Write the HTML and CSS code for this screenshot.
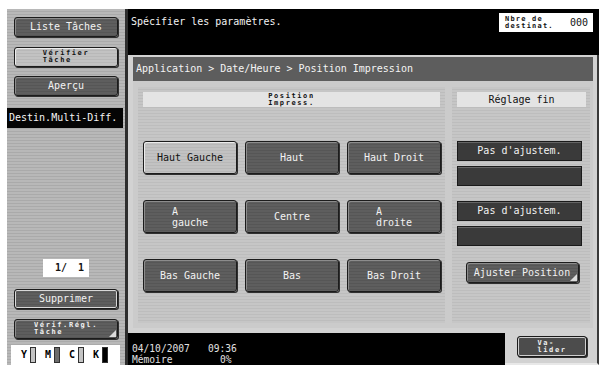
FILE: index.html
```html
<!DOCTYPE html>
<html lang="fr">
<head>
<meta charset="utf-8">
<title>Position Impression</title>
<link rel="stylesheet" href="styles.css">
</head>
<body>
<div class="screen">
  <aside class="side">
    <div class="btn side-btn first">Liste Tâches</div>
    <div class="btn side-btn light tiny-btn"><span class="tiny">Vérifier<br>Tâche</span></div>
    <div class="btn side-btn">Aperçu</div>
    <div class="destin">Destin.Multi-Diff.</div>
    <div class="spacer"></div>
    <div class="counter"><span>1/</span><span>1</span></div>
    <div class="btn side-btn framed">Supprimer</div>
    <div class="btn side-btn corner tiny-btn"><span class="tiny">Vérif.Régl.<br>Tâche</span></div>
    <div class="cmyk">
      <span class="ink">Y<i class="bar pale"></i></span>
      <span class="ink">M<i class="bar mid"></i></span>
      <span class="ink">C<i class="bar pale"></i></span>
      <span class="ink">K<i class="bar full"></i></span>
    </div>
  </aside>
  <div class="sep"></div>
  <main class="main">
    <header class="topbar">
      <div class="msg">Spécifier les paramètres.</div>
      <div class="dest-count"><span class="tiny dark">Nbre de<br>destinat.</span><span class="num">000</span></div>
    </header>
    <section class="frame">
      <div class="crumb">Application &gt; Date/Heure &gt; Position Impression</div>
      <div class="content">
        <div class="pos-panel">
          <div class="subhead"><span class="tiny dark">Position<br>Impress.</span></div>
          <div class="grid">
            <div class="btn pos light">Haut Gauche</div>
            <div class="btn pos">Haut</div>
            <div class="btn pos">Haut Droit</div>
            <div class="btn pos"><span class="lines">A<br>gauche</span></div>
            <div class="btn pos">Centre</div>
            <div class="btn pos"><span class="lines">A<br>droite</span></div>
            <div class="btn pos">Bas Gauche</div>
            <div class="btn pos">Bas</div>
            <div class="btn pos">Bas Droit</div>
          </div>
        </div>
        <div class="fine-panel">
          <div class="subhead fine-head">Réglage fin</div>
          <div class="adj first-adj">Pas d'ajustem.</div>
          <div class="adj empty"></div>
          <div class="adj second-adj">Pas d'ajustem.</div>
          <div class="adj empty"></div>
          <div class="btn adjust corner">Ajuster Position</div>
        </div>
      </div>
    </section>
    <footer class="bottom">
      <div class="status">
        <div class="row"><span class="c1">04/10/2007</span><span>09:36</span></div>
        <div class="row"><span class="c1">Mémoire</span><span class="pct">0%</span></div>
      </div>
      <div class="ok-cell">
        <div class="btn ok"><span class="tiny">Va-<br>lider</span></div>
      </div>
    </footer>
  </main>
</div>
</body>
</html>
```

FILE: styles.css
```css
html, body {
  margin: 0;
  padding: 0;
  background: #ffffff;
  overflow: hidden;
}

body {
  font-family: "DejaVu Sans Mono", "Liberation Mono", monospace;
  font-size: 10px;
  line-height: 12px;
}

.screen {
  display: flex;
  margin: 9px 0 0 7px;
  width: 592px;
  height: 356px;
}

/* ---------- left column ---------- */
.side {
  width: 118px;
  display: flex;
  flex-direction: column;
  background: repeating-linear-gradient(to bottom, #b8b8b8 0 2px, #aaaaaa 2px 3px);
}

.sep {
  width: 3px;
  background: #2e2e2e;
}

.btn {
  box-sizing: border-box;
  display: flex;
  align-items: center;
  justify-content: center;
  position: relative;
  border: 1px solid #1c1c1c;
  border-radius: 3px;
  background: repeating-linear-gradient(to bottom, #5e5e5e 0 2px, #565656 2px 3px);
  color: #f2f2f2;
  box-shadow: inset 1px 1px 0 #8c8c8c, 1px 1px 0 #303030;
  white-space: nowrap;
}

.btn.light {
  background: repeating-linear-gradient(to bottom, #c2c2c2 0 2px, #b8b8b8 2px 3px);
  color: #111111;
  box-shadow: inset 1px 1px 0 #ececec, 1px 1px 0 #303030;
}

.side-btn {
  margin-left: 7px;
  width: 104px;
  height: 20px;
}

.side-btn.first {
  margin-top: 8px;
  margin-bottom: 10px;
}

.side-btn.light {
  margin-bottom: 9px;
}

.framed {
  margin-top: 12px;
  margin-bottom: 10px;
  box-shadow: inset 0 0 0 1px #d8d8d8, 1px 1px 0 #303030;
}

.corner::after {
  content: "";
  position: absolute;
  right: 1px;
  bottom: 1px;
  width: 0;
  height: 0;
  border-left: 7px solid transparent;
  border-bottom: 7px solid #dcdcdc;
}

.tiny {
  display: block;
  font-size: 7px;
  line-height: 7px;
  letter-spacing: 1.6px;
  font-weight: bold;
  text-align: left;
}

.tiny.dark {
  color: #111111;
}

.destin {
  margin-top: 12px;
  width: 116px;
  height: 20px;
  box-sizing: border-box;
  background: #050505;
  color: #f4f4f4;
  padding-left: 2px;
  line-height: 20px;
  font-size: 10px;
}

.spacer {
  flex: 1;
}

.counter {
  margin-left: 36px;
  width: 46px;
  height: 18px;
  background: #ffffff;
  color: #111111;
  display: flex;
  justify-content: flex-end;
  align-items: center;
  gap: 11px;
  padding-right: 5px;
  box-sizing: border-box;
  font-weight: bold;
}

.cmyk {
  margin-top: 6px;
  margin-left: 4px;
  width: 109px;
  height: 20px;
  background: #ffffff;
  display: flex;
  align-items: center;
  padding-left: 10px;
  gap: 9px;
  box-sizing: border-box;
}

.ink {
  display: flex;
  align-items: center;
  gap: 3px;
  font-weight: bold;
  color: #000000;
  font-size: 10px;
}

.bar {
  display: block;
  width: 4px;
  height: 14px;
  border: 1px solid #303030;
}

.bar.pale { background: #c4c4c4; }
.bar.mid { background: #6c6c6c; }
.bar.full { background: #000000; }

/* ---------- main column ---------- */
.main {
  width: 471px;
  display: flex;
  flex-direction: column;
}

.topbar {
  height: 46px;
  background: #000000;
  color: #f2f2f2;
  display: flex;
  justify-content: space-between;
  align-items: flex-start;
  padding: 0 6px 0 3px;
  box-sizing: border-box;
}

.msg {
  margin-top: 7px;
}

.dest-count {
  margin-top: 4px;
  width: 94px;
  height: 19px;
  background: #ffffff;
  display: flex;
  align-items: center;
  justify-content: space-between;
  padding: 0 5px 0 6px;
  box-sizing: border-box;
}

.dest-count .tiny {
  letter-spacing: 1.2px;
}

.dest-count .num {
  color: #111111;
}

.frame {
  height: 278px;
  box-sizing: border-box;
  background: #d2d2d2;
  padding: 2px 4px 5px 5px;
  display: flex;
  flex-direction: column;
  border-right: 2px solid #3a3a3a;
}

.crumb {
  height: 24px;
  background: #5d5d5d;
  color: #f4f4f4;
  line-height: 24px;
  padding-left: 3px;
  font-size: 10px;
}

.content {
  flex: 1;
  display: flex;
  gap: 7px;
  padding: 6px 0 5px 5px;
  background: #cbcbcb;
}

.pos-panel {
  width: 307px;
  box-sizing: border-box;
  padding: 5px;
  background: repeating-linear-gradient(to bottom, #c6c6c6 0 2px, #bdbdbd 2px 3px);
}

.fine-panel {
  width: 138px;
  box-sizing: border-box;
  padding: 5px 4px 5px 5px;
  display: flex;
  flex-direction: column;
  align-items: center;
  background: repeating-linear-gradient(to bottom, #c6c6c6 0 2px, #bdbdbd 2px 3px);
}

.subhead {
  height: 15px;
  box-sizing: border-box;
  background: #e4e4e4;
  color: #111111;
  display: flex;
  align-items: center;
  justify-content: center;
  align-self: stretch;
}

.fine-head {
  line-height: 15px;
}

.grid {
  margin-top: 34px;
  display: grid;
  grid-template-columns: repeat(3, 94px);
  grid-auto-rows: 33px;
  column-gap: 8px;
  row-gap: 26px;
}

.lines {
  display: block;
  text-align: left;
  line-height: 11px;
}

.adj {
  box-sizing: border-box;
  width: 125px;
  height: 20px;
  background: #3a3a3a;
  border: 1px solid #1a1a1a;
  box-shadow: inset 0 1px 0 #666666;
  color: #f2f2f2;
  text-align: center;
  line-height: 17px;
  align-self: flex-start;
}

.first-adj {
  margin-top: 34px;
}

.empty {
  margin-top: 5px;
}

.second-adj {
  margin-top: 15px;
}

.adjust {
  margin-top: 16px;
  width: 113px;
  height: 21px;
  margin-left: 1px;
}

.bottom {
  height: 32px;
  display: flex;
}

.status {
  width: 377px;
  background: #000000;
  color: #e2e2e2;
  padding: 10px 0 0 4px;
  box-sizing: border-box;
  font-size: 9.6px;
  line-height: 11px;
}

.row {
  display: flex;
}

.c1 {
  width: 76px;
}

.pct {
  margin-left: 12px;
}

.ok-cell {
  width: 94px;
  background: #d2d2d2;
  box-sizing: border-box;
  padding: 3px 0 0 12px;
  border-right: 2px solid #3a3a3a;
  border-bottom: 2px solid #e8e8e8;
}

.ok {
  width: 70px;
  height: 21px;
  box-shadow: inset 0 0 0 1px #cfcfcf, 1px 1px 0 #303030;
  background: #4c4c4c;
}
```
